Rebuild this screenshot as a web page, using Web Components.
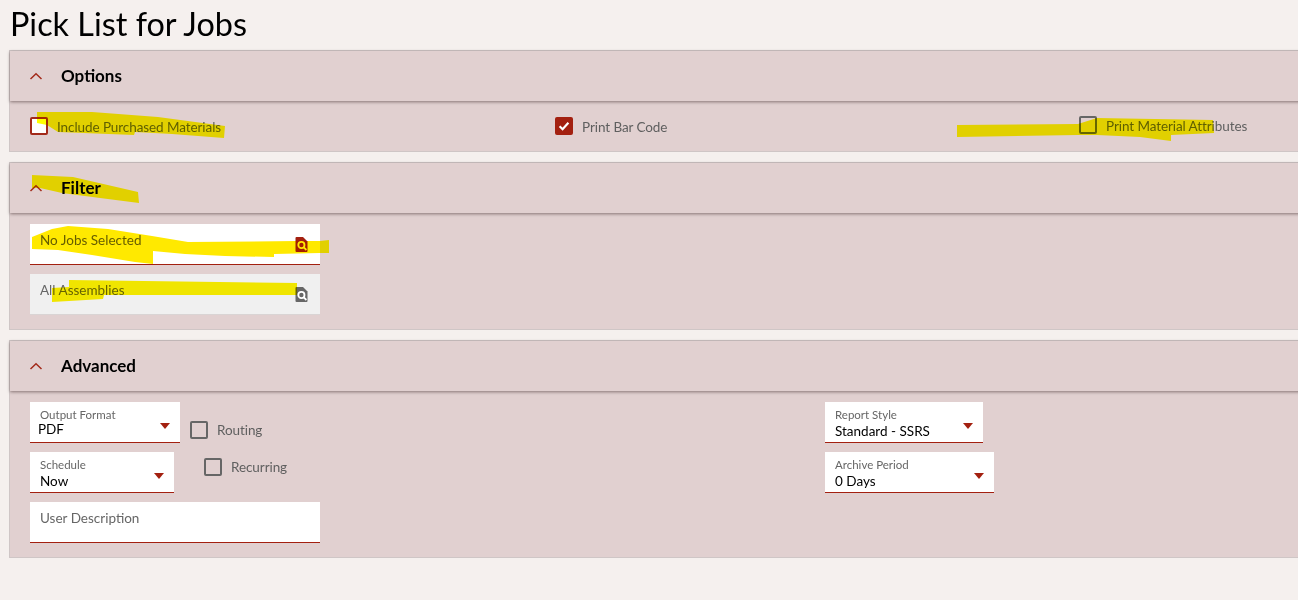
<!DOCTYPE html>
<html>
<head>
<meta charset="utf-8">
<title>Pick List for Jobs</title>
<style>
    html, body{
        margin: 0;
        height: 600px;
        overflow: hidden;
        background: #f5f0ee;
        font-family: Lato, "Open Sans", sans-serif;
    }
    h1{
        margin: 0;
        padding: 0 0 0 10px;
        height: 50px;
        font-size: 32.4px;
        line-height: 47px;
        font-weight: 400;
        color: #000;
    }
    main{
        display: flex;
        flex-direction: column;
        gap: 10px;
        padding-left: 9px;
        width: 1320px;
    }
    .three{
        display: grid;
        grid-template-columns: 525px 524px 1fr;
    }
    .stack{
        display: flex;
        flex-direction: column;
        gap: 9px;
    }
    .advanced{
        display: grid;
        grid-template-columns: 795px 1fr;
    }
    .line{
        display: flex;
    }
</style>
</head>
<body>
<h1>Pick List for Jobs</h1>
<main>
    <pick-panel heading="Options" pad="16px 20px">
        <div class="three">
            <pick-check label="Include Purchased Materials" state="focus" low></pick-check>
            <pick-check label="Print Bar Code" state="on" low></pick-check>
            <pick-check label="Print Material Attributes" style="margin-top:-1px" low></pick-check>
        </div>
    </pick-panel>
    <pick-panel heading="Filter" pad="11px 20px 14px">
        <div class="stack">
            <pick-lookup label="No Jobs Selected"></pick-lookup>
            <pick-lookup label="All Assemblies" disabled></pick-lookup>
        </div>
    </pick-panel>
    <pick-panel heading="Advanced" pad="11px 20px 14px">
        <div class="advanced">
            <div class="stack">
                <div class="line">
                    <pick-select label="Output Format" value="PDF" width="150" nudge="-2"></pick-select>
                    <pick-check label="Routing" style="margin:19px 0 0 10px"></pick-check>
                </div>
                <div class="line">
                    <pick-select label="Schedule" value="Now" width="144"></pick-select>
                    <pick-check label="Recurring" style="margin:6px 0 0 30px"></pick-check>
                </div>
                <pick-lookup label="User Description" plain></pick-lookup>
            </div>
            <div class="stack">
                <pick-select label="Report Style" value="Standard - SSRS" width="158"></pick-select>
                <pick-select label="Archive Period" value="0 Days" width="169"></pick-select>
            </div>
        </div>
    </pick-panel>
</main>
<pick-marker></pick-marker>

<script>
const panelTemplate = document.createElement('template')
panelTemplate.innerHTML = `
    <style>
        :host{
            display: block;
            background: #e1d0d0;
            border: 1px solid #cfc6c6;
            border-right: none;
        }
        header{
            height: 50px;
            display: flex;
            align-items: center;
            background: #e1d0d0;
            box-shadow: 0 1px 3px rgba(60, 40, 40, 0.55);
            position: relative;
            padding-left: 19px;
        }
        svg{
            width: 14px;
            height: 8px;
            margin-right: 18px;
        }
        h2{
            margin: 0 0 2px;
            font-size: 17px;
            font-weight: 700;
            color: #000;
        }
    </style>
    <header>
        <svg viewBox="0 0 14 8"><path d="M1.5 7 L7 1.8 L12.5 7" fill="none" stroke="#a32a1a" stroke-width="1.5"/></svg>
        <h2></h2>
    </header>
    <section><slot></slot></section>
`

class PickPanel extends HTMLElement{
    constructor(){
        super()
        this.attachShadow({mode: "open"})
        this.shadowRoot.appendChild(panelTemplate.content.cloneNode(true))
        this.shadowRoot.querySelector('h2').textContent = this.getAttribute('heading')
        this.shadowRoot.querySelector('section').style.padding = this.getAttribute('pad')
    }
}

const checkTemplate = document.createElement('template')
checkTemplate.innerHTML = `
    <style>
        :host{
            display: block;
        }
        label{
            display: flex;
            align-items: center;
            height: 18px;
            font-size: 13.5px;
            letter-spacing: -0.08px;
            color: #5f5f5f;
        }
        :host([low]) .text{
            margin-top: 2px;
        }
        .box{
            box-sizing: border-box;
            width: 18px;
            height: 18px;
            border: 2px solid #666;
            border-radius: 2px;
            margin-right: 9px;
            display: flex;
        }
        .focus .box{
            border-color: #a32a1a;
            background: #fff;
        }
        .on .box{
            border-color: #a32010;
            background: #a32010;
        }
        svg{
            display: none;
            width: 14px;
            height: 14px;
        }
        .on svg{
            display: block;
        }
    </style>
    <label>
        <span class="box"><svg viewBox="0 0 14 14"><path d="M2.6 7.2 L5.6 10.2 L11.4 3.8" fill="none" stroke="#fff" stroke-width="2.2"/></svg></span>
        <span class="text"></span>
    </label>
`

class PickCheck extends HTMLElement{
    constructor(){
        super()
        this.attachShadow({mode: "open"})
        this.shadowRoot.appendChild(checkTemplate.content.cloneNode(true))
        this.shadowRoot.querySelector('.text').textContent = this.getAttribute('label')
        const state = this.getAttribute('state')
        if (state){
            this.shadowRoot.querySelector('label').classList.add(state)
        }
    }
}

const selectTemplate = document.createElement('template')
selectTemplate.innerHTML = `
    <style>
        :host{
            display: block;
            box-sizing: border-box;
            height: 41px;
            background: #fff;
            border-bottom: 1px solid #a32010;
            position: relative;
            padding: 6px 0 0 10px;
        }
        .label{
            font-size: 11.5px;
            line-height: 14px;
            color: #666;
        }
        .value{
            font-size: 13.5px;
            line-height: 18px;
            color: #000;
        }
        .arrow{
            position: absolute;
            right: 10px;
            top: 21px;
            width: 0;
            height: 0;
            border-left: 5.5px solid transparent;
            border-right: 5.5px solid transparent;
            border-top: 6px solid #a32010;
        }
    </style>
    <div class="label"></div>
    <div class="value"></div>
    <div class="arrow"></div>
`

class PickSelect extends HTMLElement{
    constructor(){
        super()
        this.attachShadow({mode: "open"})
        this.shadowRoot.appendChild(selectTemplate.content.cloneNode(true))
        this.shadowRoot.querySelector('.label').textContent = this.getAttribute('label')
        const value = this.shadowRoot.querySelector('.value')
        value.textContent = this.getAttribute('value')
        // the PDF value sits a bit up and left of the others in this form
        const nudge = this.getAttribute('nudge') || 0
        value.style.margin = nudge + 'px 0 0 ' + nudge + 'px'
        this.style.width = this.getAttribute('width') + 'px'
    }
}

const lookupTemplate = document.createElement('template')
lookupTemplate.innerHTML = `
    <style>
        :host{
            display: block;
            box-sizing: border-box;
            width: 290px;
            height: 41px;
            background: #fff;
            border-bottom: 1px solid #a32010;
            position: relative;
            padding: 8px 0 0 10px;
            font-size: 13.5px;
            line-height: 17px;
            color: #666;
        }
        :host([disabled]){
            background: #f0f0f0;
            border-bottom: 1px solid #d9d4d4;
        }
        svg{
            position: absolute;
            right: 12px;
            top: 13px;
            width: 13px;
            height: 15px;
        }
        :host([plain]) svg{
            display: none;
        }
        .sheet{
            fill: #a32010;
        }
        :host([disabled]) .sheet{
            fill: #666;
        }
    </style>
    <span></span>
    <svg viewBox="0 0 13 15">
        <path class="sheet" d="M0.5 1 Q0.5 0 1.5 0 H8 L12.5 4.5 V14 Q12.5 15 11.5 15 H1.5 Q0.5 15 0.5 14 Z"/>
        <circle cx="6.4" cy="8" r="3.1" fill="none" stroke="#fff" stroke-width="1.8"/>
        <path d="M8.6 10.2 L11.4 13" stroke="#fff" stroke-width="1.8"/>
    </svg>
`

class PickLookup extends HTMLElement{
    constructor(){
        super()
        this.attachShadow({mode: "open"})
        this.shadowRoot.appendChild(lookupTemplate.content.cloneNode(true))
        this.shadowRoot.querySelector('span').textContent = this.getAttribute('label')
    }
}

// the yellow marker strokes someone drew over the screenshot
const markerTemplate = document.createElement('template')
markerTemplate.innerHTML = `
    <style>
        :host{
            display: block;
            position: absolute;
            left: 0;
            top: 0;
            width: 1298px;
            height: 600px;
            mix-blend-mode: multiply;
            pointer-events: none;
        }
        .pink{
            fill: #ffff00;
        }
        .white{
            fill: #ffe900;
        }
        .grey{
            fill: #fff400;
        }
    </style>
    <svg width="1298" height="600">
        <polygon class="pink" points="37,112 92,112 158,117 225,126 224,138 172,134 135,132 134,135 58,132 47,125 37,123"/>
        <polygon class="pink" points="957,125 1078,124 1097,118 1213,120 1214,133 1171,135 1171,141 1140,137 1097,135 1078,135 957,137"/>
        <polygon class="pink" points="32,175 73,177 138,192 139,203 100,198 62,193 40,188 32,188"/>
        <polygon class="white" points="32,237 52,229 68,226 108,229 152,236 188,242 297,241 320,241 320,253 274,254 274,257 225,256 185,254 153,251 153,264 135,262 92,255 58,250 32,249"/>
        <polygon class="pink" points="320,241 329,240 329,253 320,253"/>
        <polygon class="grey" points="69,280 297,283 297,295 104,295 103,299 52,302 52,288 69,287"/>
    </svg>
`

class PickMarker extends HTMLElement{
    constructor(){
        super()
        this.attachShadow({mode: "open"})
        this.shadowRoot.appendChild(markerTemplate.content.cloneNode(true))
    }
}

customElements.define('pick-panel', PickPanel)
customElements.define('pick-check', PickCheck)
customElements.define('pick-select', PickSelect)
customElements.define('pick-lookup', PickLookup)
customElements.define('pick-marker', PickMarker)
</script>
</body>
</html>
